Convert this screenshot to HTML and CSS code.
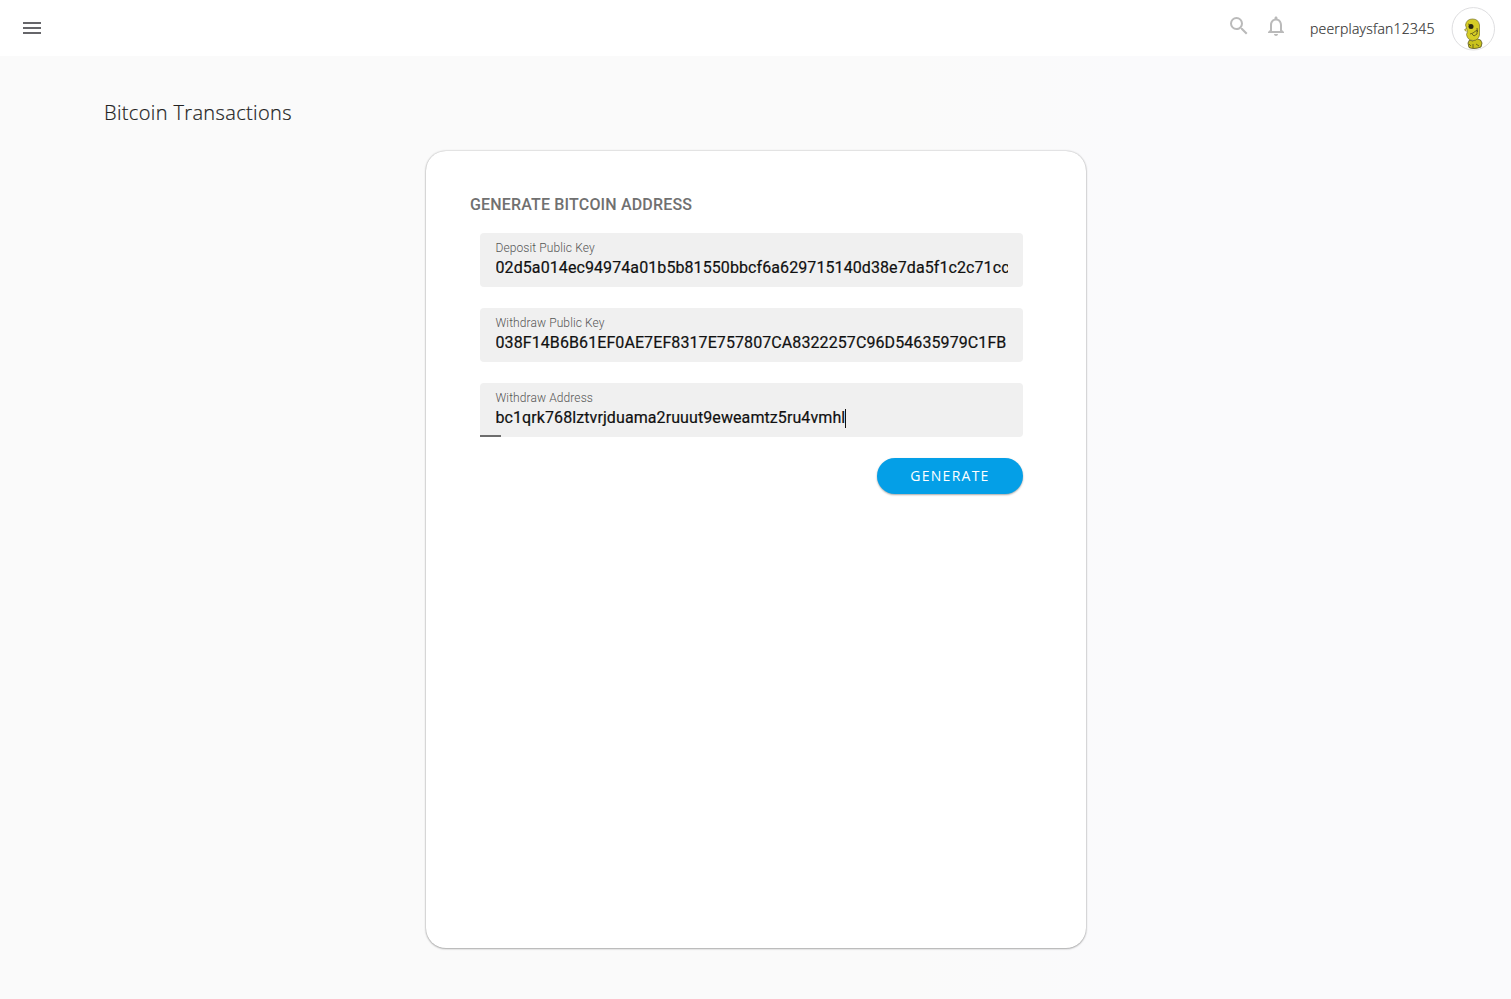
FILE: index.html
```html
<!DOCTYPE html>
<html lang="en">
<head>
<meta charset="utf-8">
<title>Bitcoin Transactions</title>
<link rel="stylesheet" href="styles.css">
</head>
<body>
<header class="topbar">
  <svg class="menu" viewBox="0 0 24 24"><path d="M3 18h18v-2H3v2zm0-5h18v-2H3v2zm0-7v2h18V6H3z"/></svg>
  <div class="account">
    <svg class="icon search" viewBox="0 0 24 24"><path d="M15.5 14h-.79l-.28-.27A6.471 6.471 0 0 0 16 9.5 6.5 6.5 0 1 0 9.5 16c1.61 0 3.09-.59 4.23-1.57l.27.28v.79l5 4.99L20.49 19l-4.99-5zm-6 0C7.01 14 5 11.99 5 9.5S7.01 5 9.5 5 14 7.01 14 9.5 11.99 14 9.5 14z"/></svg>
    <svg class="icon bell" viewBox="0 0 24 24"><path d="M12 22c1.1 0 2-.9 2-2h-4c0 1.1.9 2 2 2zm6-6v-5c0-3.07-1.63-5.64-4.5-6.32V4c0-.83-.67-1.5-1.5-1.5s-1.5.67-1.5 1.5v.68C7.64 5.36 6 7.92 6 11v5l-2 2v1h16v-1l-2-2zm-2 1H8v-6c0-2.48 1.51-4.5 4-4.5s4 2.02 4 4.5v6z"/></svg>
    <span class="username">peerplaysfan12345</span>
    <svg class="avatar" viewBox="0 0 44 44">
      <circle cx="22.300" cy="21.800" r="21.2" fill="#fff" stroke="#dedee0"/>
      <path d="M17 36l1.500-3 3 1 5-2 3 1 1.500 3-1 4q-4 1.500-7 1.500-3 0-5-1z" fill="#c9c21e" stroke="#55521c" stroke-width=".8"/>
      <path d="M14.500 18q1-6 7-6 6 0 7 6v10q-1 5-6 5.500-6 0-7-6l1-3z" fill="#d6cd25" stroke="#77722b" stroke-width=".7"/>
      <path d="M15.500 21l-2 2 2 1.500" fill="#d6cd25" stroke="#66612b" stroke-width=".6"/>
      <circle cx="20" cy="19.500" r="2.500" fill="#292813"/>
      <path d="M17 17l2 .7M26 21l.5 4M19 27l3-1 4-3v4l-3 2-2-2M22 37v4M18 37l2 2M25 37l3 2" fill="none" stroke="#56501c" stroke-width=".8"/>
    </svg>
  </div>
</header>
<main class="page">
  <h1 class="title">Bitcoin Transactions</h1>
  <section class="card">
    <h2 class="heading">GENERATE BITCOIN ADDRESS</h2>
    <form class="form">
      <div class="field">
        <span class="label">Deposit Public Key</span>
        <span class="value">02d5a014ec94974a01b5b81550bbcf6a629715140d38e7da5f1c2c71cc</span>
      </div>
      <div class="field">
        <span class="label">Withdraw Public Key</span>
        <span class="value">038F14B6B61EF0AE7EF8317E757807CA8322257C96D54635979C1FB</span>
      </div>
      <div class="field active">
        <span class="label">Withdraw Address</span>
        <span class="value">bc1qrk768lztvrjduama2ruuut9eweamtz5ru4vmhl<i class="caret"></i></span>
      </div>
      <button class="generate" type="button">GENERATE</button>
    </form>
  </section>
</main>
</body>
</html>
```
FILE: styles.css
```css
* { box-sizing: border-box; }
body {
  margin: 0;
  height: 999px;
  overflow: hidden;
  background: linear-gradient(90deg, #fafafa 60%, #fafafc 75%);
  font-family: Roboto, sans-serif;
}
.topbar {
  height: 56px;
  padding: 0 16px 0 20px;
  background: #fff;
  display: flex;
  align-items: center;
  justify-content: space-between;
}
.menu { width: 24px; height: 24px; fill: #66666a; }
.account { display: flex; align-items: center; }
.icon { width: 24px; height: 24px; fill: #bababa; margin-bottom: 4px; }
.bell { margin-left: 13px; margin-right: 22px; }
.username {
  width: 125px;
  margin-right: 16px;
  padding-top: 2px;
  font: 300 14px/20px "Open Sans", sans-serif;
  letter-spacing: .22px;
  -webkit-text-stroke: .2px #333;
  color: #333;
  white-space: nowrap;
}
.avatar { width: 44px; height: 44px; margin-top: 1px; }
.page { padding-top: 43px; }
.title {
  margin: 0 0 0 104px;
  font: 300 20px/28px "Open Sans", sans-serif;
  letter-spacing: .36px;
  -webkit-text-stroke: .2px #222;
  color: #222;
}
.card {
  width: 660px;
  height: 797px;
  margin: 24px 0 0 426px;
  padding: 43px 63px 0 44px;
  background: #fff;
  border-radius: 20px;
  box-shadow: 0 0 2px rgba(0, 0, 0, .3), 0 1px 2px rgba(0, 0, 0, .25);
}
.heading {
  margin: 0;
  font-size: 16px;
  line-height: 22px;
  font-weight: 500;
  letter-spacing: .17px;
  color: #707070;
  white-space: nowrap;
}
.form { display: flex; flex-direction: column; margin: 17px 0 0 10px; }
.field {
  height: 54px;
  margin-bottom: 21px;
  padding: 7px 15px 0 15.5px;
  border-radius: 4px;
  background: #f0f0f0;
  display: flex;
  flex-direction: column;
  overflow: hidden;
}
.label { font-size: 12px; line-height: 16px; font-weight: 300; letter-spacing: .1px; color: #555; }
.value {
  display: flex;
  align-items: center;
  height: 24px;
  font-size: 16px;
  line-height: 24px;
  letter-spacing: .09px;
  -webkit-text-stroke: .2px #111;
  color: #111;
  white-space: nowrap;
  overflow: hidden;
}
.caret { width: 1px; height: 19px; background: #111; }
.active { background: linear-gradient(#6d6d6d, #6d6d6d) left bottom / 21px 2px no-repeat #f0f0f0; border-bottom-left-radius: 0; }
.generate {
  align-self: flex-end;
  width: 146px;
  height: 36px;
  padding: 0;
  border: 0;
  border-radius: 18px;
  background: #049fe7;
  box-shadow: 0 1px 2px rgba(0, 0, 0, .35);
  color: #fff;
  font: 500 14px/36px "Open Sans", sans-serif;
  letter-spacing: 1.25px;
}
```
